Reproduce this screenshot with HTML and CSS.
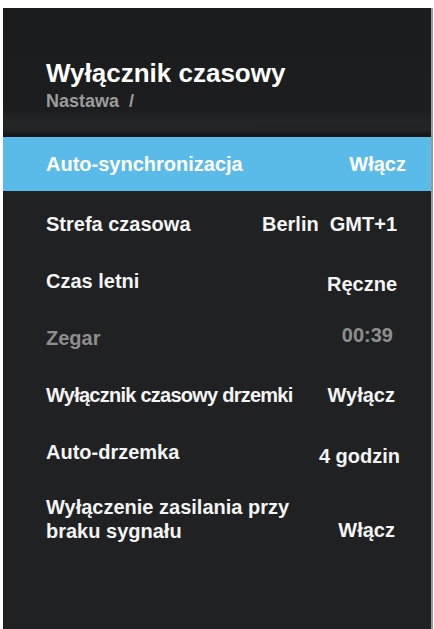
FILE: index.html
```html
<!DOCTYPE html>
<html lang="pl">
<head>
<meta charset="utf-8">
<title>Wyłącznik czasowy</title>
<link rel="stylesheet" href="styles.css">
</head>
<body>
<div class="panel">
  <header class="head">
    <h1 class="title">Wyłącznik czasowy</h1>
    <div class="crumb">Nastawa&nbsp; /</div>
  </header>
  <div class="row row-active">
    <span class="label">Auto-synchronizacja</span>
    <span class="value">Włącz</span>
  </div>
  <div class="list">
    <div class="row">
      <span class="label">Strefa czasowa</span>
      <span class="value">Berlin&nbsp; GMT+1</span>
    </div>
    <div class="row">
      <span class="label">Czas letni</span>
      <span class="value low">Ręczne</span>
    </div>
    <div class="row row-disabled">
      <span class="label">Zegar</span>
      <span class="value high in4">00:39</span>
    </div>
    <div class="row">
      <span class="label tight">Wyłącznik czasowy drzemki</span>
      <span class="value in1">Wyłącz</span>
    </div>
    <div class="row">
      <span class="label">Auto-drzemka</span>
      <span class="value lower out3">4 godzin</span>
    </div>
    <div class="row row-double">
      <span class="label">Wyłączenie zasilania przy<br>braku sygnału</span>
      <span class="value mid in1">Włącz</span>
    </div>
  </div>
</div>
</body>
</html>
```
FILE: styles.css
```css
html, body {
  margin: 0;
  padding: 0;
  background: #ffffff;
}
body {
  font-family: "Liberation Sans", Arial, sans-serif;
  font-weight: bold;
  color: #f4f4f4;
  overflow: hidden;
}
.panel {
  margin: 8px 3px 0 3px;
  width: 428px;
  height: 621px;
  background: #1f2122;
  box-shadow: 2px 0 0 #9a9c9c;
  overflow: hidden;
}
.head {
  height: 79px;
  padding: 50px 0 0 43px;
  background: linear-gradient(to bottom, #1a1c1d 0, #1b1d1e 102px, #232526 112px, #222425 122px, #151718 127px, #111314 129px);
}
.title {
  margin: 0;
  font-size: 26px;
  line-height: 30px;
  font-weight: bold;
  color: #ffffff;
}
.crumb {
  margin-top: 3px;
  font-size: 18px;
  line-height: 21px;
  color: #9b9b9b;
}
.row {
  display: flex;
  justify-content: space-between;
  align-items: flex-start;
  height: 57px;
  padding: 0 34px 0 43px;
  font-size: 20px;
  line-height: 23px;
}
.row-active {
  height: 54px;
  align-items: center;
  padding-right: 25px;
  background: #5bbbe8;
  color: #ffffff;
}
.list {
  padding-top: 22px;
}
.row-disabled {
  color: #8e8e8e;
}
.label.tight {
  letter-spacing: -0.75px;
}
.row-double .label {
  line-height: 24px;
  margin-top: -3px;
}
.value.low { margin-top: 3px; }
.value.high { margin-top: -3px; }
.value.lower { margin-top: 4px; }
.value.mid { margin-top: 21px; }
.value.in1 { margin-right: 2px; }
.value.in4 { margin-right: 4px; }
.value.out3 { margin-right: -3px; }
```
